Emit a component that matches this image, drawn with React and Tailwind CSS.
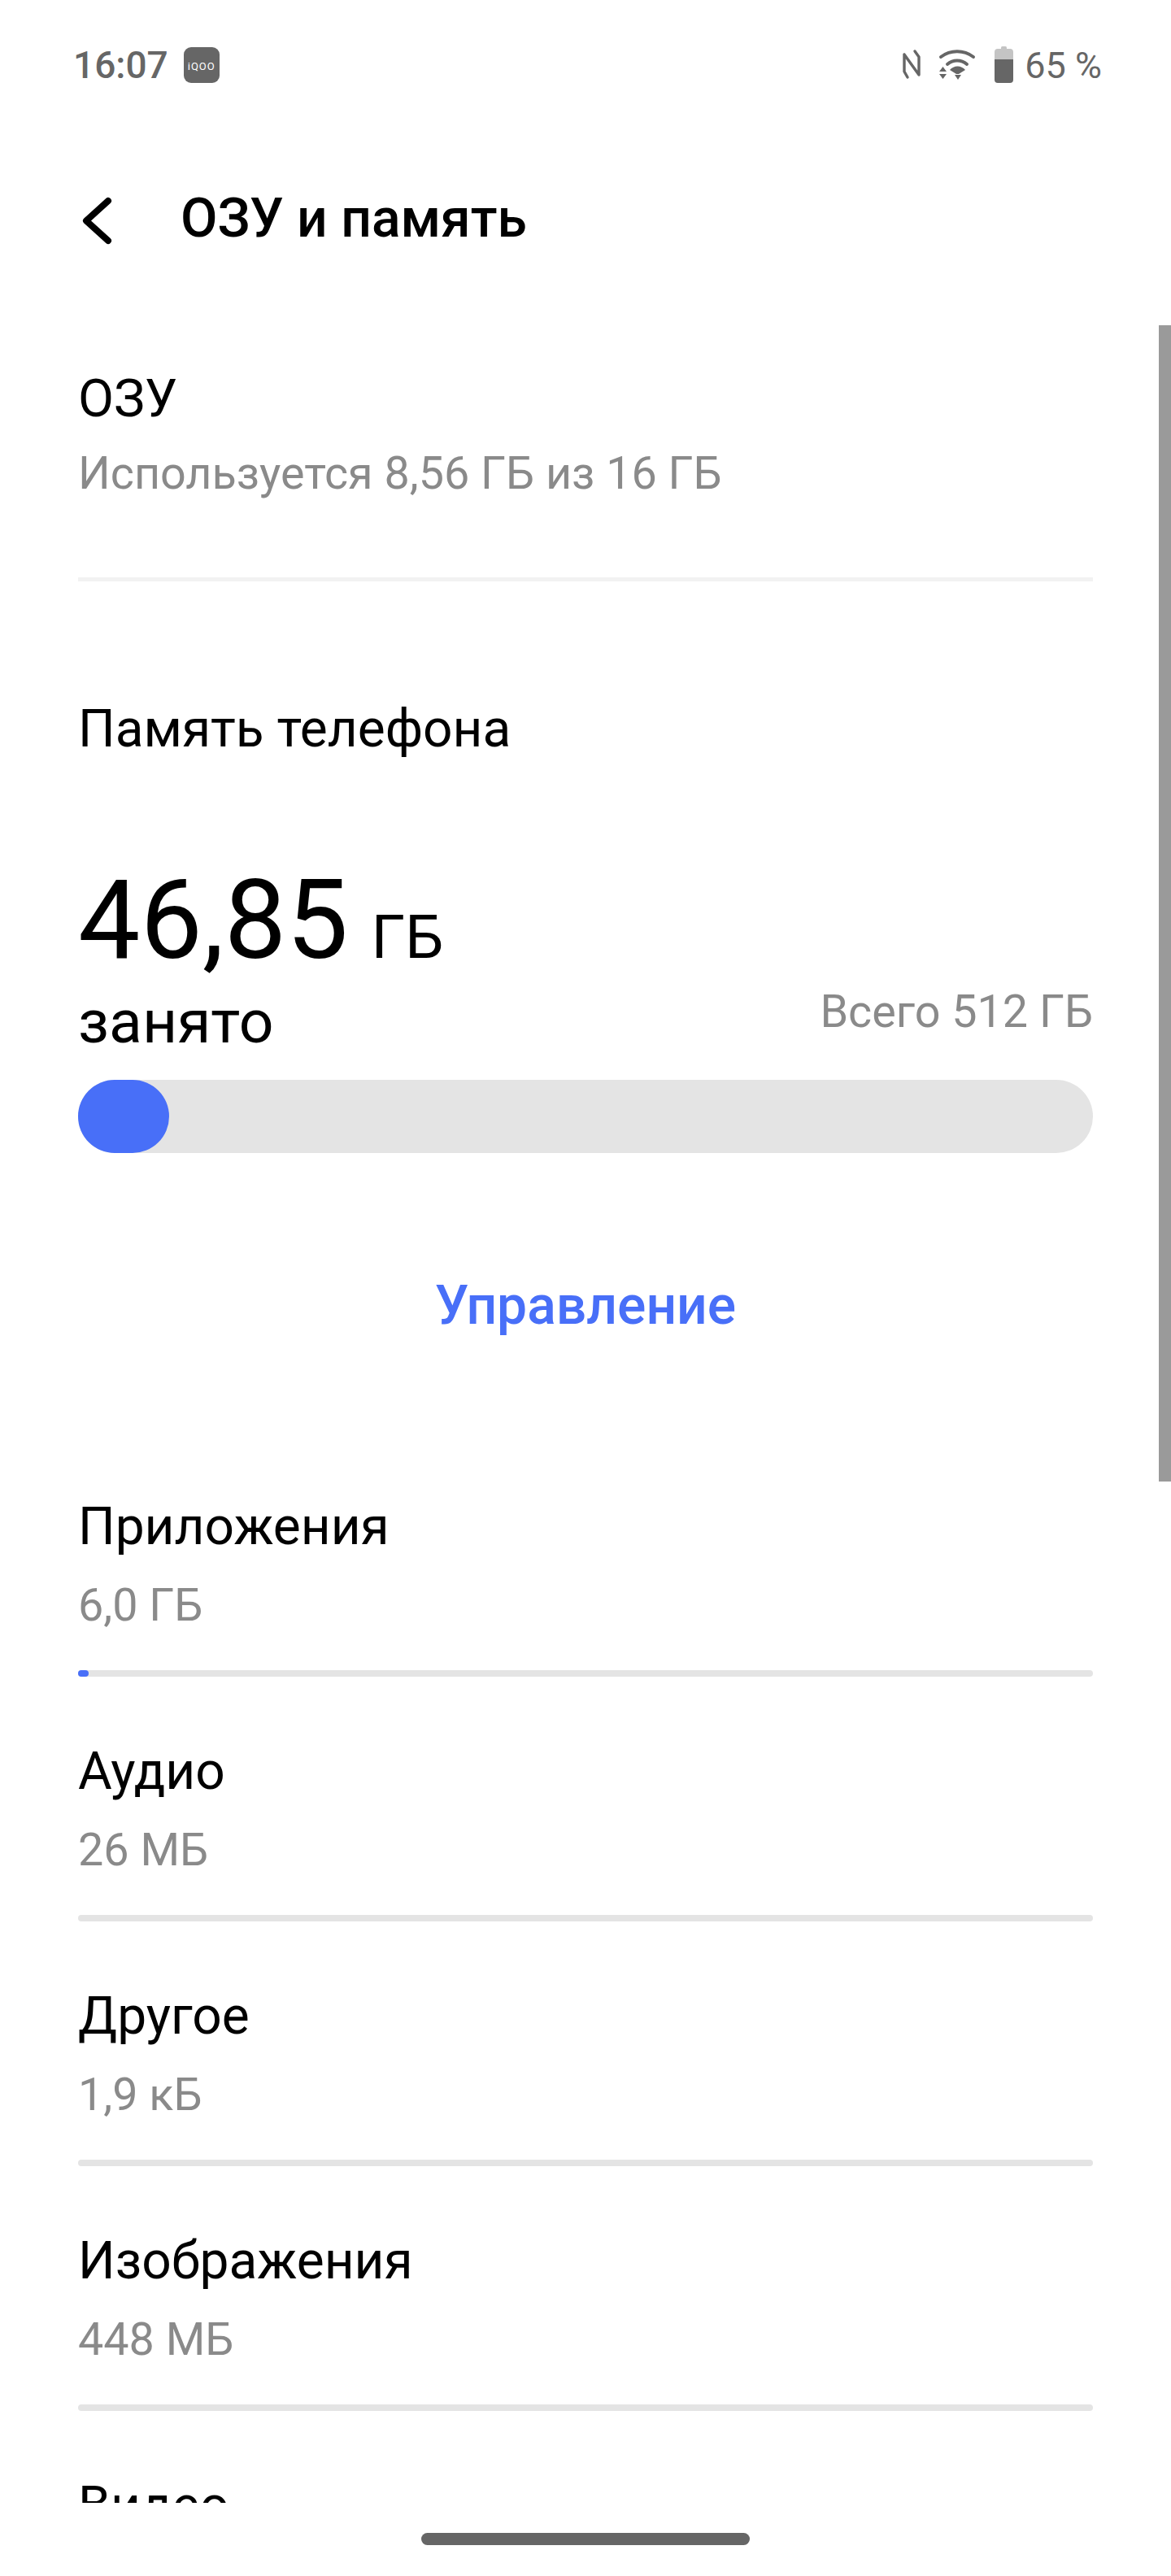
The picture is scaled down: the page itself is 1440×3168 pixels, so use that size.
const rows = [
  { name: 'Приложения', size: '6,0 ГБ', fill: true },
  { name: 'Аудио', size: '26 МБ' },
  { name: 'Другое', size: '1,9 кБ' },
  { name: 'Изображения', size: '448 МБ' },
];

function StatusIcons() {
  return (
    <svg width="145" height="60" viewBox="0 0 145 60" fill="none" className="block">
      {/* NFC */}
      <path d="M5 17 L5 38 L9 45 M5 17 L23 42 L23 20 L18 13" stroke="#666" strokeWidth="3.4" strokeLinecap="round" strokeLinejoin="round" />
      {/* wifi */}
      <path d="M50 20 C62 11 78 11 90 20" stroke="#666" strokeWidth="4" strokeLinecap="round" />
      <path d="M58 29 C65 23 75 23 82 29" stroke="#666" strokeWidth="4" strokeLinecap="round" />
      <path d="M61 36 C66 30 75 30 80 36 L72 41 L69 41 Z" fill="#666" />
      <path d="M67 42 L75 42 L71 48 Z" fill="#666" />
      <path d="M52.5 32 L48 38 L57 38 Z M48 41 L57 41 L52.5 47 Z" fill="#666" />
      {/* battery */}
      <rect x="124" y="7" width="7" height="5" rx="1.5" fill="#c4c4c4" />
      <path d="M116 14 a4 4 0 0 1 4 -4 h15 a4 4 0 0 1 4 4 v9 h-23 Z" fill="#c4c4c4" />
      <path d="M116 23 h23 v25 a4 4 0 0 1 -4 4 h-15 a4 4 0 0 1 -4 -4 Z" fill="#666" />
    </svg>
  );
}

function UsageRow({ name, size, fill }) {
  return (
    <div className="h-[301px] shrink-0">
      <div className="text-[64px] leading-[72px] text-black">{name}</div>
      <div className="mt-[29px] text-[55.7px] leading-[62px] text-[#8a8a8a]">{size}</div>
      <div className="mt-[49px] h-[8px] rounded-full bg-[#e4e4e4]">
        {fill && <div className="h-[8px] w-[13px] rounded-full bg-[#486ff8]"></div>}
      </div>
    </div>
  );
}

export default function App() {
  return (
    <div className="relative flex h-[3168px] w-[1440px] flex-col overflow-hidden bg-white font-['Roboto','Noto_Sans',sans-serif]">
      {/* status bar */}
      <div className="flex h-[160px] shrink-0 items-center justify-between pl-[90px] pr-[85px]">
        <div className="flex items-center gap-[19px]">
          <span className="text-[46px] font-medium leading-none text-[#666]">16:07</span>
          <div className="flex h-[44px] w-[44px] items-end justify-center rounded-[9px] bg-[#666] pb-[14px] text-[13px] leading-none tracking-[1px] text-white">iQOO</div>
        </div>
        <div className="flex items-center gap-[8px]">
          <StatusIcons />
          <span className="text-[45px] leading-none text-[#666]">65 %</span>
        </div>
      </div>

      {/* header */}
      <div className="flex h-[224px] shrink-0 items-start pl-[96px] pt-[69px]">
        <svg width="48" height="72" viewBox="0 0 48 72" fill="none" className="mr-[78px] mt-[6px] shrink-0">
          <path d="M37 12 L10 36.5 L37 61" stroke="#000" strokeWidth="8" strokeLinecap="round" strokeLinejoin="round" />
        </svg>
        <h1 className="text-[66px] font-medium leading-[80px] text-black">ОЗУ и память</h1>
      </div>

      {/* scrollbar */}
      <div className="absolute right-0 top-[400px] h-[1422px] w-[15px] bg-[#9a9a9a]"></div>

      {/* scroll content */}
      <div className="flex h-[2694px] shrink-0 flex-col overflow-hidden px-[96px]">
        <div className="mt-[71px] shrink-0 text-[64px] leading-[72px] text-black">ОЗУ</div>
        <div className="mt-[24px] shrink-0 text-[55.7px] leading-[62px] text-[#8a8a8a]">Используется 8,56 ГБ из 16 ГБ</div>
        <div className="mt-[97px] h-[5px] shrink-0 bg-[#f2f2f2]"></div>

        <div className="mt-[146px] shrink-0 text-[64px] leading-[72px] text-black">Память телефона</div>

        <div className="mt-[114px] flex shrink-0 items-baseline">
          <span className="text-[136px] leading-[170px] text-black">46,85</span>
          <span className="ml-[28px] text-[75px] leading-none text-black">ГБ</span>
        </div>
        <div className="mt-[-4px] flex shrink-0 items-end justify-between">
          <span className="text-[75px] leading-[80px] text-black">занято</span>
          <span className="pb-[21px] text-[55.7px] leading-[62px] text-[#8a8a8a]">Всего 512 ГБ</span>
        </div>
        <div className="mt-[32px] h-[90px] w-[1248px] shrink-0 rounded-full bg-[#e4e4e4]">
          <div className="h-[90px] w-[112px] rounded-full bg-[#486ff8]"></div>
        </div>

        <div className="mt-[150px] shrink-0 text-center text-[66px] font-medium leading-[76px] text-[#486ff8]">Управление</div>

        <div className="mt-[198px] flex shrink-0 flex-col">
          {rows.map((r) => (
            <UsageRow key={r.name} {...r} />
          ))}
          {/* next row, cut off by the scroll area */}
          <div className="shrink-0 text-[64px] leading-[72px] text-black">Видео</div>
        </div>
      </div>

      {/* home indicator */}
      <div className="mx-auto mt-[37px] h-[15px] w-[404px] rounded-full bg-[#666]"></div>
    </div>
  );
}
